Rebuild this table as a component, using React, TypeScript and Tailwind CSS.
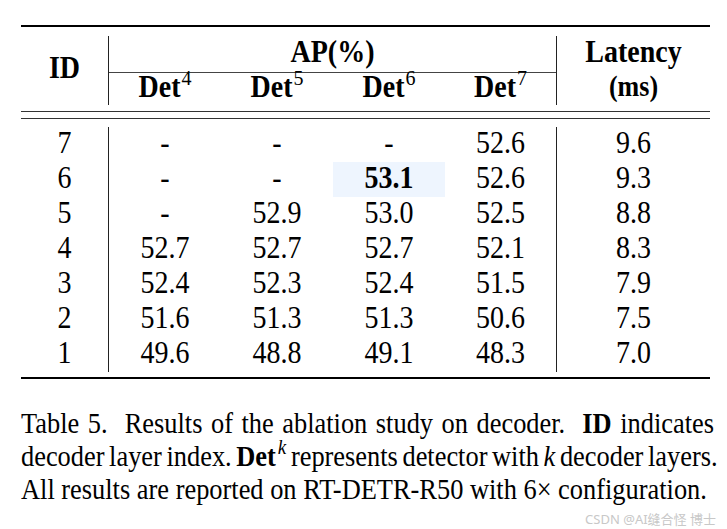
const ROWS = [
  { id: "7", vals: ["-", "-", "-", "52.6"], lat: "9.6" },
  { id: "6", vals: ["-", "-", "53.1", "52.6"], lat: "9.3" },
  { id: "5", vals: ["-", "52.9", "53.0", "52.5"], lat: "8.8" },
  { id: "4", vals: ["52.7", "52.7", "52.7", "52.1"], lat: "8.3" },
  { id: "3", vals: ["52.4", "52.3", "52.4", "51.5"], lat: "7.9" },
  { id: "2", vals: ["51.6", "51.3", "51.3", "50.6"], lat: "7.5" },
  { id: "1", vals: ["49.6", "48.8", "49.1", "48.3"], lat: "7.0" },
];

const COLS = ["w-[112px]", "w-[112px]", "w-[112px]", "w-[111px]"];

// the source picture is a little taller than plain Times, so text is stretched a bit
const T = "inline-block scale-y-[1.1]";

function Det({ n }: { n: string }) {
  return (
    <span className={`${T} font-bold`}>
      Det<sup className="font-normal text-[20px] -top-[11px] ml-px">{n}</sup>
    </span>
  );
}

export default function App() {
  return (
    <div className="relative w-[727px] h-[529px] bg-white text-black [font-family:'Liberation_Serif',serif]">
      <div className="pt-[25px] pl-[21px] pr-[17px]">
        {/* top rule */}
        <div className="h-[2px] bg-black" />

        {/* header */}
        <div className="mt-[9px] flex h-[69px] text-[28px] leading-none">
          <div className="w-[88px] border-r border-[#222] flex items-center justify-center font-bold pb-[6px]">
            <span className={T}>ID</span>
          </div>
          <div className="w-[447px] flex flex-col">
            <div className="h-[36px] flex items-center justify-center font-bold pb-[4px]">
              <span className={T}>AP(%)</span>
            </div>
            <div className="h-px bg-[#444]" />
            <div className="flex flex-1 pb-[4px]">
              {COLS.map((w, i) => (
                <div key={i} className={`${w} flex items-center justify-center`}>
                  <Det n={String(i + 4)} />
                </div>
              ))}
            </div>
          </div>
          <div className="flex-1 border-l border-[#222] flex flex-col font-bold">
            <div className="h-[36px] flex items-center justify-center pb-[4px]">
              <span className={T}>Latency</span>
            </div>
            <div className="flex-1 flex items-center justify-center text-[26px] pb-[3px]">
              <span className={T}>(ms)</span>
            </div>
          </div>
        </div>

        {/* double rule */}
        <div className="mt-[6px] h-px bg-[#333]" />
        <div className="mt-[6px] h-px bg-[#333]" />

        {/* body */}
        <div className="mt-[8px] text-[28px] leading-none">
          {ROWS.map((r) => (
            <div key={r.id} className="flex h-[35px]">
              <div className="w-[88px] border-r border-[#222] flex items-center justify-center pb-[4px]">
                <span className={T}>{r.id}</span>
              </div>
              {r.vals.map((v, i) => (
                <div
                  key={i}
                  className={`${COLS[i]} flex items-center justify-center pb-[4px] ${
                    v === "53.1" ? "bg-[#eef5fe] font-bold" : ""
                  }`}
                >
                  <span className={T}>{v}</span>
                </div>
              ))}
              <div className="flex-1 border-l border-[#222] flex items-center justify-center pb-[4px]">
                <span className={T}>{r.lat}</span>
              </div>
            </div>
          ))}
        </div>

        {/* bottom rule */}
        <div className="mt-[5px] h-[2px] bg-black" />

        {/* caption */}
        <div className="mt-[28px] -mr-[4px] text-[26.4px] leading-[33px]">
          <div className="text-justify [text-align-last:justify] whitespace-nowrap scale-y-[1.12]">
            Table 5.&nbsp; Results of the ablation study on decoder.&nbsp; <span className="font-bold">ID</span> indicates
          </div>
          <div className="text-justify [text-align-last:justify] whitespace-nowrap [word-spacing:-2px] scale-y-[1.12]">
            decoder layer index. <span className="font-bold">Det</span>
            <sup className="italic text-[19px] -top-[11px] ml-[2px]">k</sup> represents detector with <span className="italic">k</span> decoder layers.
          </div>
          <div className="whitespace-nowrap scale-y-[1.12] origin-left">
            All results are reported on RT-DETR-R50 with 6× configuration.
          </div>
        </div>
      </div>

      <div className="absolute right-[11px] bottom-[3px] text-[13px] leading-none text-[#c8c8c8] [font-family:'Noto_Sans','Noto_Sans_CJK_SC',sans-serif]">
        CSDN @AI缝合怪 博士
      </div>
    </div>
  );
}
